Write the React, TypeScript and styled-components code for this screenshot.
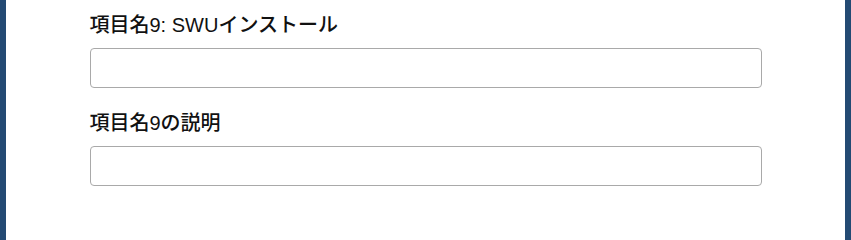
import { createGlobalStyle } from "styled-components";
import styled from "styled-components";

const GlobalStyle = createGlobalStyle`
  html, body {
    margin: 0;
    padding: 0;
    background: #ffffff;
    overflow: hidden;
  }
  body {
    font-family: "Liberation Sans", Arial, "Noto Sans CJK JP", sans-serif;
    color: #111;
  }
`;

const Frame = styled.div`
  height: 100vh;
  border-left: 6px solid #234a73;
  border-right: 6px solid #234a73;
  background: #ffffff;
  box-sizing: border-box;
`;

const Form = styled.form`
  max-width: 672px;
  margin: 0 auto;
  padding-top: 11px;
  display: flex;
  flex-direction: column;
  gap: 21px;
`;

const Field = styled.div`
  display: flex;
  flex-direction: column;
  gap: 8px;
`;

const Label = styled.label`
  font-size: 20px;
  line-height: 29px;
  font-weight: 500;
  color: #111;
`;

const Input = styled.input`
  box-sizing: border-box;
  height: 40px;
  width: 100%;
  padding: 0 9px;
  border: 1px solid #a9a9a9;
  border-radius: 4px;
  font-family: "Liberation Sans", Arial, "Noto Sans CJK JP", sans-serif;
  font-size: 20px;
  color: #111;
  background: #fff;
  caret-color: #000;
  &:focus {
    outline: none;
  }
`;

const fields = [
  { id: "item9", label: "項目名9: SWUインストール", focus: true },
  { id: "item9desc", label: "項目名9の説明", focus: false },
];

function App() {
  return (
    <>
      <GlobalStyle />
      <Frame>
        <Form>
          {fields.map((f) => (
            <Field key={f.id}>
              <Label htmlFor={f.id}>{f.label}</Label>
              <Input id={f.id} type="text" autoFocus={f.focus} />
            </Field>
          ))}
        </Form>
      </Frame>
    </>
  );
}

export default App;
